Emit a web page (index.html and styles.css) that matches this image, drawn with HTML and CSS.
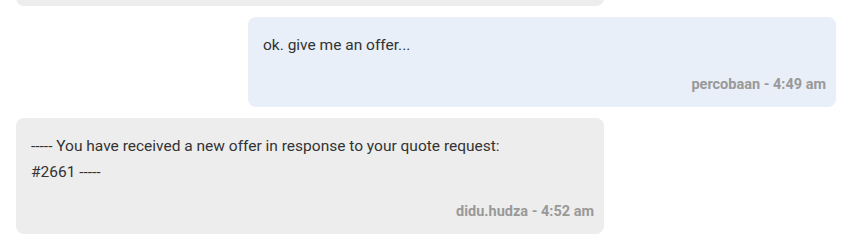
FILE: index.html
```html
<!DOCTYPE html>
<html>
<head>
<meta charset="utf-8">
<link rel="stylesheet" href="styles.css">
</head>
<body>
<div class="chat">
  <div class="msg msg-in msg-clipped"></div>
  <div class="msg msg-out">
    <div class="msg-text">ok. give me an offer...</div>
    <div class="msg-meta">percobaan - 4:49 am</div>
  </div>
  <div class="msg msg-in">
    <div class="msg-text">----- You have received a new offer in response to your quote request:<br>#2661 -----</div>
    <div class="msg-meta">didu.hudza - 4:52 am</div>
  </div>
</div>
</body>
</html>
```
FILE: styles.css
```css
html, body {
  margin: 0;
  padding: 0;
  background: #ffffff;
}
body {
  font-family: Roboto, "Liberation Sans", Arial, sans-serif;
  font-size: 15.5px;
  color: #333333;
  overflow: hidden;
}
.chat {
  display: flex;
  flex-direction: column;
  gap: 11px;
  padding: 0 8px 0 16px;
  margin-top: -84px;
}
.msg {
  width: 588px;
  box-sizing: border-box;
  padding: 15px 10px 13px 15px;
  border-radius: 8px;
}
.msg-clipped {
  height: 90px;
}
.msg-in {
  align-self: flex-start;
  background: #ededed;
}
.msg-out {
  align-self: flex-end;
  background: #e8eff8;
}
.msg-text {
  line-height: 26px;
}
.msg-meta {
  margin-top: 18px;
  line-height: 18px;
  text-align: right;
  font-weight: 700;
  font-size: 14.5px;
  color: #999999;
}
```
